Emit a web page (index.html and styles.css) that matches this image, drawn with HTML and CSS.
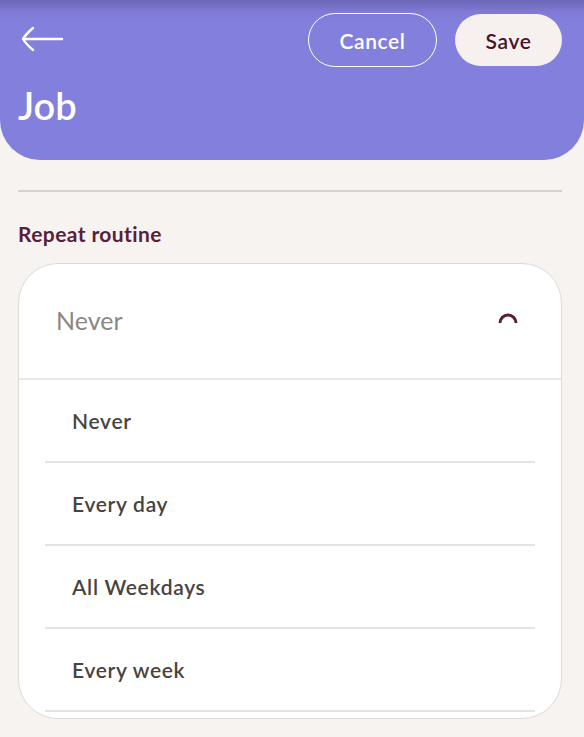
FILE: index.html
```html
<!DOCTYPE html>
<html lang="en">
<head>
    <meta charset="UTF-8">
    <meta name="viewport" content="width=device-width, initial-scale=1.0">
    <title>Job</title>
    <link rel="stylesheet" href="styles.css">
</head>
<body>

    <!-- Naglowek -->
    <div class="header">
        <div class="header-bar">
            <svg class="back" width="44" height="30" viewBox="0 0 44 30">
                <path d="M3 15 H42 M13 4 Q6 10 3 15 Q6 20 13 26" fill="none" stroke="#fff" stroke-width="2.4" stroke-linecap="round"/>
            </svg>
            <div class="actions">
                <button class="btn btn-outline">Cancel</button>
                <button class="btn btn-fill">Save</button>
            </div>
        </div>
        <h1>Job</h1>
    </div>

    <div class="content">
        <hr class="divider">

        <div class="label">Repeat routine</div>

        <!-- Rozwijana lista -->
        <div class="dropdown">
            <div class="dropdown-head">
                <span class="placeholder">Never</span>
                <svg class="chevron" width="22" height="14" viewBox="0 0 22 14">
                    <path d="M3 12 A8 8 0 0 1 19 12" fill="none" stroke="#5a1f38" stroke-width="3"/>
                </svg>
            </div>
            <div class="options">
                <div class="option">Never</div>
                <div class="option">Every day</div>
                <div class="option">All Weekdays</div>
                <div class="option">Every week</div>
            </div>
        </div>
    </div>

</body>
</html>
```

FILE: styles.css
```css
/* Tlo strony */
body {
    margin: 0;
    background: #f6f3f0;
    font-family: Lato, "Open Sans", sans-serif;
}

/* Naglowek */
.header {
    height: 160px;
    box-sizing: border-box;
    background: linear-gradient(180deg, #6d67b6 0px, #7f7ad4 12px, #837fdc 22px);
    border-radius: 0 0 40px 40px;
    padding: 13px 22px 0 20px;
}

.header-bar {
    display: flex;
    justify-content: space-between;
    align-items: center;
}

.back {
    display: block;
    margin-top: -2px;
}

.actions {
    display: flex;
    gap: 18px;
}

.btn {
    height: 54px;
    border-radius: 27px;
    font-family: Lato, sans-serif;
    font-size: 21px;
    font-weight: 600;
    letter-spacing: 0.6px;
    padding: 0;
    cursor: pointer;
}

.btn-outline {
    background: transparent;
    border: 1.5px solid #fff;
    color: #fff;
    width: 129px;
}

.btn-fill {
    background: #f6f1ee;
    border: none;
    color: #4a1228;
    width: 107px;
    height: 52px;
    margin-top: 1px;
}

.header h1 {
    margin: 18px 0 0 -2px;
    color: #fff;
    font-size: 38px;
    font-weight: 600;
    line-height: 40px;
}

/* Tresc */
.content {
    padding: 30px 22px 0 18px;
}

.divider {
    border: none;
    border-top: 2px solid #d6d1cd;
    margin: 0;
}

.label {
    margin-top: 29px;
    font-size: 21px;
    font-weight: 700;
    letter-spacing: 0.4px;
    color: #5a1f38;
    line-height: 26px;
}

/* Lista rozwijana */
.dropdown {
    margin-top: 16px;
    height: 456px;
    box-sizing: border-box;
    background: #fff;
    border: 1px solid #dfdad6;
    border-radius: 40px;
    overflow: hidden;
}

.dropdown-head {
    height: 116px;
    display: flex;
    justify-content: space-between;
    align-items: center;
    padding: 0 42px 0 37px;
    border-bottom: 2px solid #ebe8e5;
    box-sizing: border-box;
}

.placeholder {
    font-size: 25px;
    color: #8b8782;
    margin-top: -3px;
}

.chevron {
    display: block;
    margin-top: -6px;
}

.options {
    padding: 0 26px;
}

.option {
    height: 83px;
    box-sizing: border-box;
    display: flex;
    align-items: center;
    padding-left: 27px;
    border-bottom: 2px solid #e6e4e2;
    font-size: 21px;
    font-weight: 600;
    letter-spacing: 0.7px;
    color: #47443f;
}
```
